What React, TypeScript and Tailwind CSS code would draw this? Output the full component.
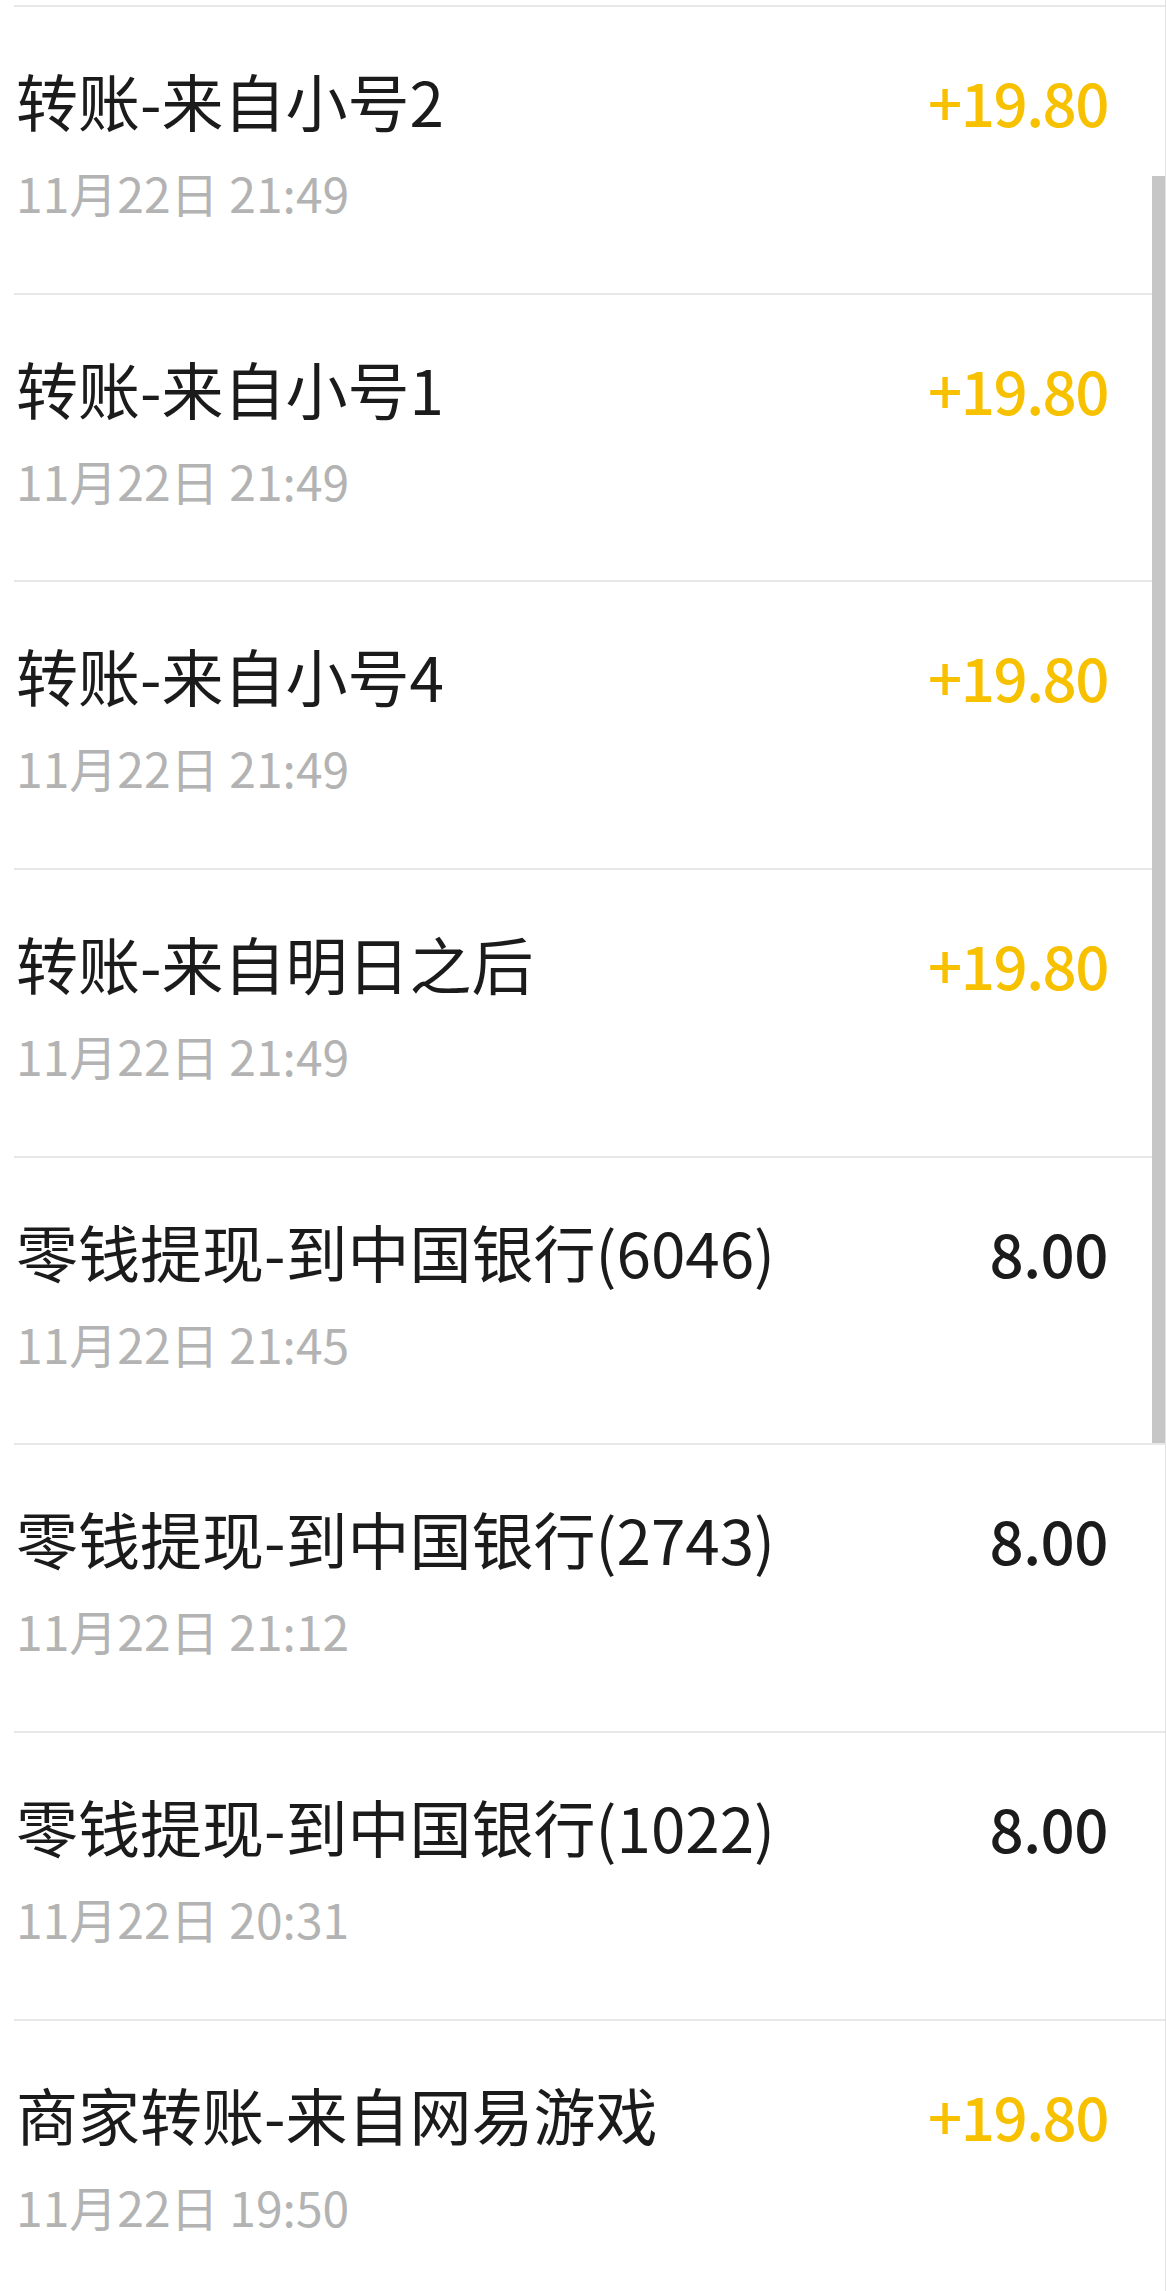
import React from "react";

type Row = { title: string; time: string; amount: string; income: boolean };

const rows: Row[] = [
  { title: "转账-来自小号2", time: "11月22日 21:49", amount: "+19.80", income: true },
  { title: "转账-来自小号1", time: "11月22日 21:49", amount: "+19.80", income: true },
  { title: "转账-来自小号4", time: "11月22日 21:49", amount: "+19.80", income: true },
  { title: "转账-来自明日之后", time: "11月22日 21:49", amount: "+19.80", income: true },
  { title: "零钱提现-到中国银行(6046)", time: "11月22日 21:45", amount: "8.00", income: false },
  { title: "零钱提现-到中国银行(2743)", time: "11月22日 21:12", amount: "8.00", income: false },
  { title: "零钱提现-到中国银行(1022)", time: "11月22日 20:31", amount: "8.00", income: false },
  { title: "商家转账-来自网易游戏", time: "11月22日 19:50", amount: "+19.80", income: true },
];

export default function App() {
  return (
    <div
      className="relative w-[1166px] h-[2291px] overflow-hidden bg-white"
      style={{ fontFamily: '"Noto Sans CJK SC", "Noto Sans", sans-serif' }}
    >
      <div className="pt-[5px]">
        {rows.map((r, i) => (
          <div
            key={i}
            className="ml-[14px] h-[287.7px] border-t-2 border-[#e8e8e8] pl-[2px] pr-[58px] pt-[62px]"
          >
            <div className="flex items-baseline justify-between">
              <div className="text-[62px] leading-none text-[#1b1b1b]">{r.title}</div>
              <div
                className={
                  r.income
                    ? "text-[60px] leading-none font-medium tracking-[-1.5px] text-[#f7c100]"
                    : "text-[60px] leading-none font-medium tracking-[-0.5px] text-[#1b1b1b]"
                }
              >
                {r.amount}
              </div>
            </div>
            <div className="mt-[37px] text-[48px] leading-none text-[#b3b3b3]">{r.time}</div>
          </div>
        ))}
      </div>
      <div className="absolute right-0 top-0 bottom-0 w-px bg-[#e4e4e4]" />
      <div className="absolute right-[1px] top-[176px] h-[1267px] w-[13px] bg-[#c6c6c6]" />
    </div>
  );
}
